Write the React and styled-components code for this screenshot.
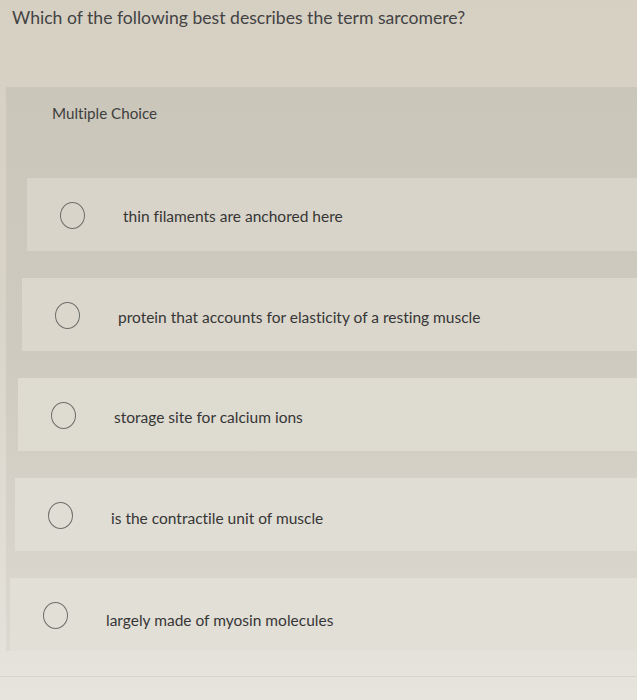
import React from "react";
import styled, { createGlobalStyle } from "styled-components";

const Global = createGlobalStyle`
  html, body { margin: 0; padding: 0; }
  body {
    background: #d7d1c4;
    font-family: "Lato", "Liberation Sans", sans-serif;
    font-variant-ligatures: none;
    color: #3b3b3b;
  }
`;

const Page = styled.div`
  width: 637px;
  height: 700px;
  overflow: hidden;
  background: linear-gradient(180deg, #d6d0c3 0%, #d8d3c7 40%, #e2dfd7 85%, #e6e4dd 100%);
  display: flex;
  flex-direction: column;
`;

const Question = styled.h1`
  margin: 0;
  height: 87px;
  box-sizing: border-box;
  padding: 7px 0 0 12px;
  font-size: 17.6px;
  font-weight: 400;
  color: #434343;
`;

const Panel = styled.section`
  margin-left: 6px;
  height: 564px;
  box-sizing: border-box;
  background: linear-gradient(180deg, #cbc6ba 0%, #cfcabf 45%, #d7d3ca 80%, #dcd9d1 100%);
  display: flex;
  flex-direction: column;
`;

const Label = styled.div`
  height: 91px;
  box-sizing: border-box;
  padding: 17px 0 0 46px;
  font-size: 15.2px;
  color: #3e3e3e;
`;

const List = styled.ul`
  list-style: none;
  margin: 0;
  padding: 0;
  display: flex;
  flex-direction: column;
  gap: 27px;
`;

const Card = styled.li`
  margin-left: ${(p) => p.$inset}px;
  height: 73px;
  box-sizing: border-box;
  padding: 2px 0 0 33px;
  background: ${(p) => p.$tone};
  display: flex;
  align-items: center;
  gap: 38px;
`;

const Radio = styled.span`
  width: 25px;
  height: 27px;
  flex: none;
  border-radius: 50%;
  border: 1.4px solid #6e6e6a;
  box-sizing: border-box;
  background: transparent;
`;

const Text = styled.span`
  font-size: 15.5px;
  color: #363636;
  padding-top: ${(p) => p.$drop}px;
`;

const Footer = styled.div`
  height: 25px;
  flex: none;
  border-bottom: 1px solid #d6d3cb;
`;

const options = [
  { text: "thin filaments are anchored here", inset: 21, tone: "#d9d4c9", drop: 0 },
  { text: "protein that accounts for elasticity of a resting muscle", inset: 16, tone: "#dbd7cc", drop: 2 },
  { text: "storage site for calcium ions", inset: 12, tone: "#dedbd1", drop: 3 },
  { text: "is the contractile unit of muscle", inset: 9, tone: "#e0ddd4", drop: 5 },
  { text: "largely made of myosin molecules", inset: 4, tone: "#e2dfd7", drop: 8 },
];

export default function App() {
  return (
    <>
      <Global />
      <Page>
        <Question>Which of the following best describes the term sarcomere?</Question>
        <Panel>
          <Label>Multiple Choice</Label>
          <List>
            {options.map((o) => (
              <Card key={o.text} $inset={o.inset} $tone={o.tone}>
                <Radio />
                <Text $drop={o.drop}>{o.text}</Text>
              </Card>
            ))}
          </List>
        </Panel>
        <Footer />
      </Page>
    </>
  );
}
